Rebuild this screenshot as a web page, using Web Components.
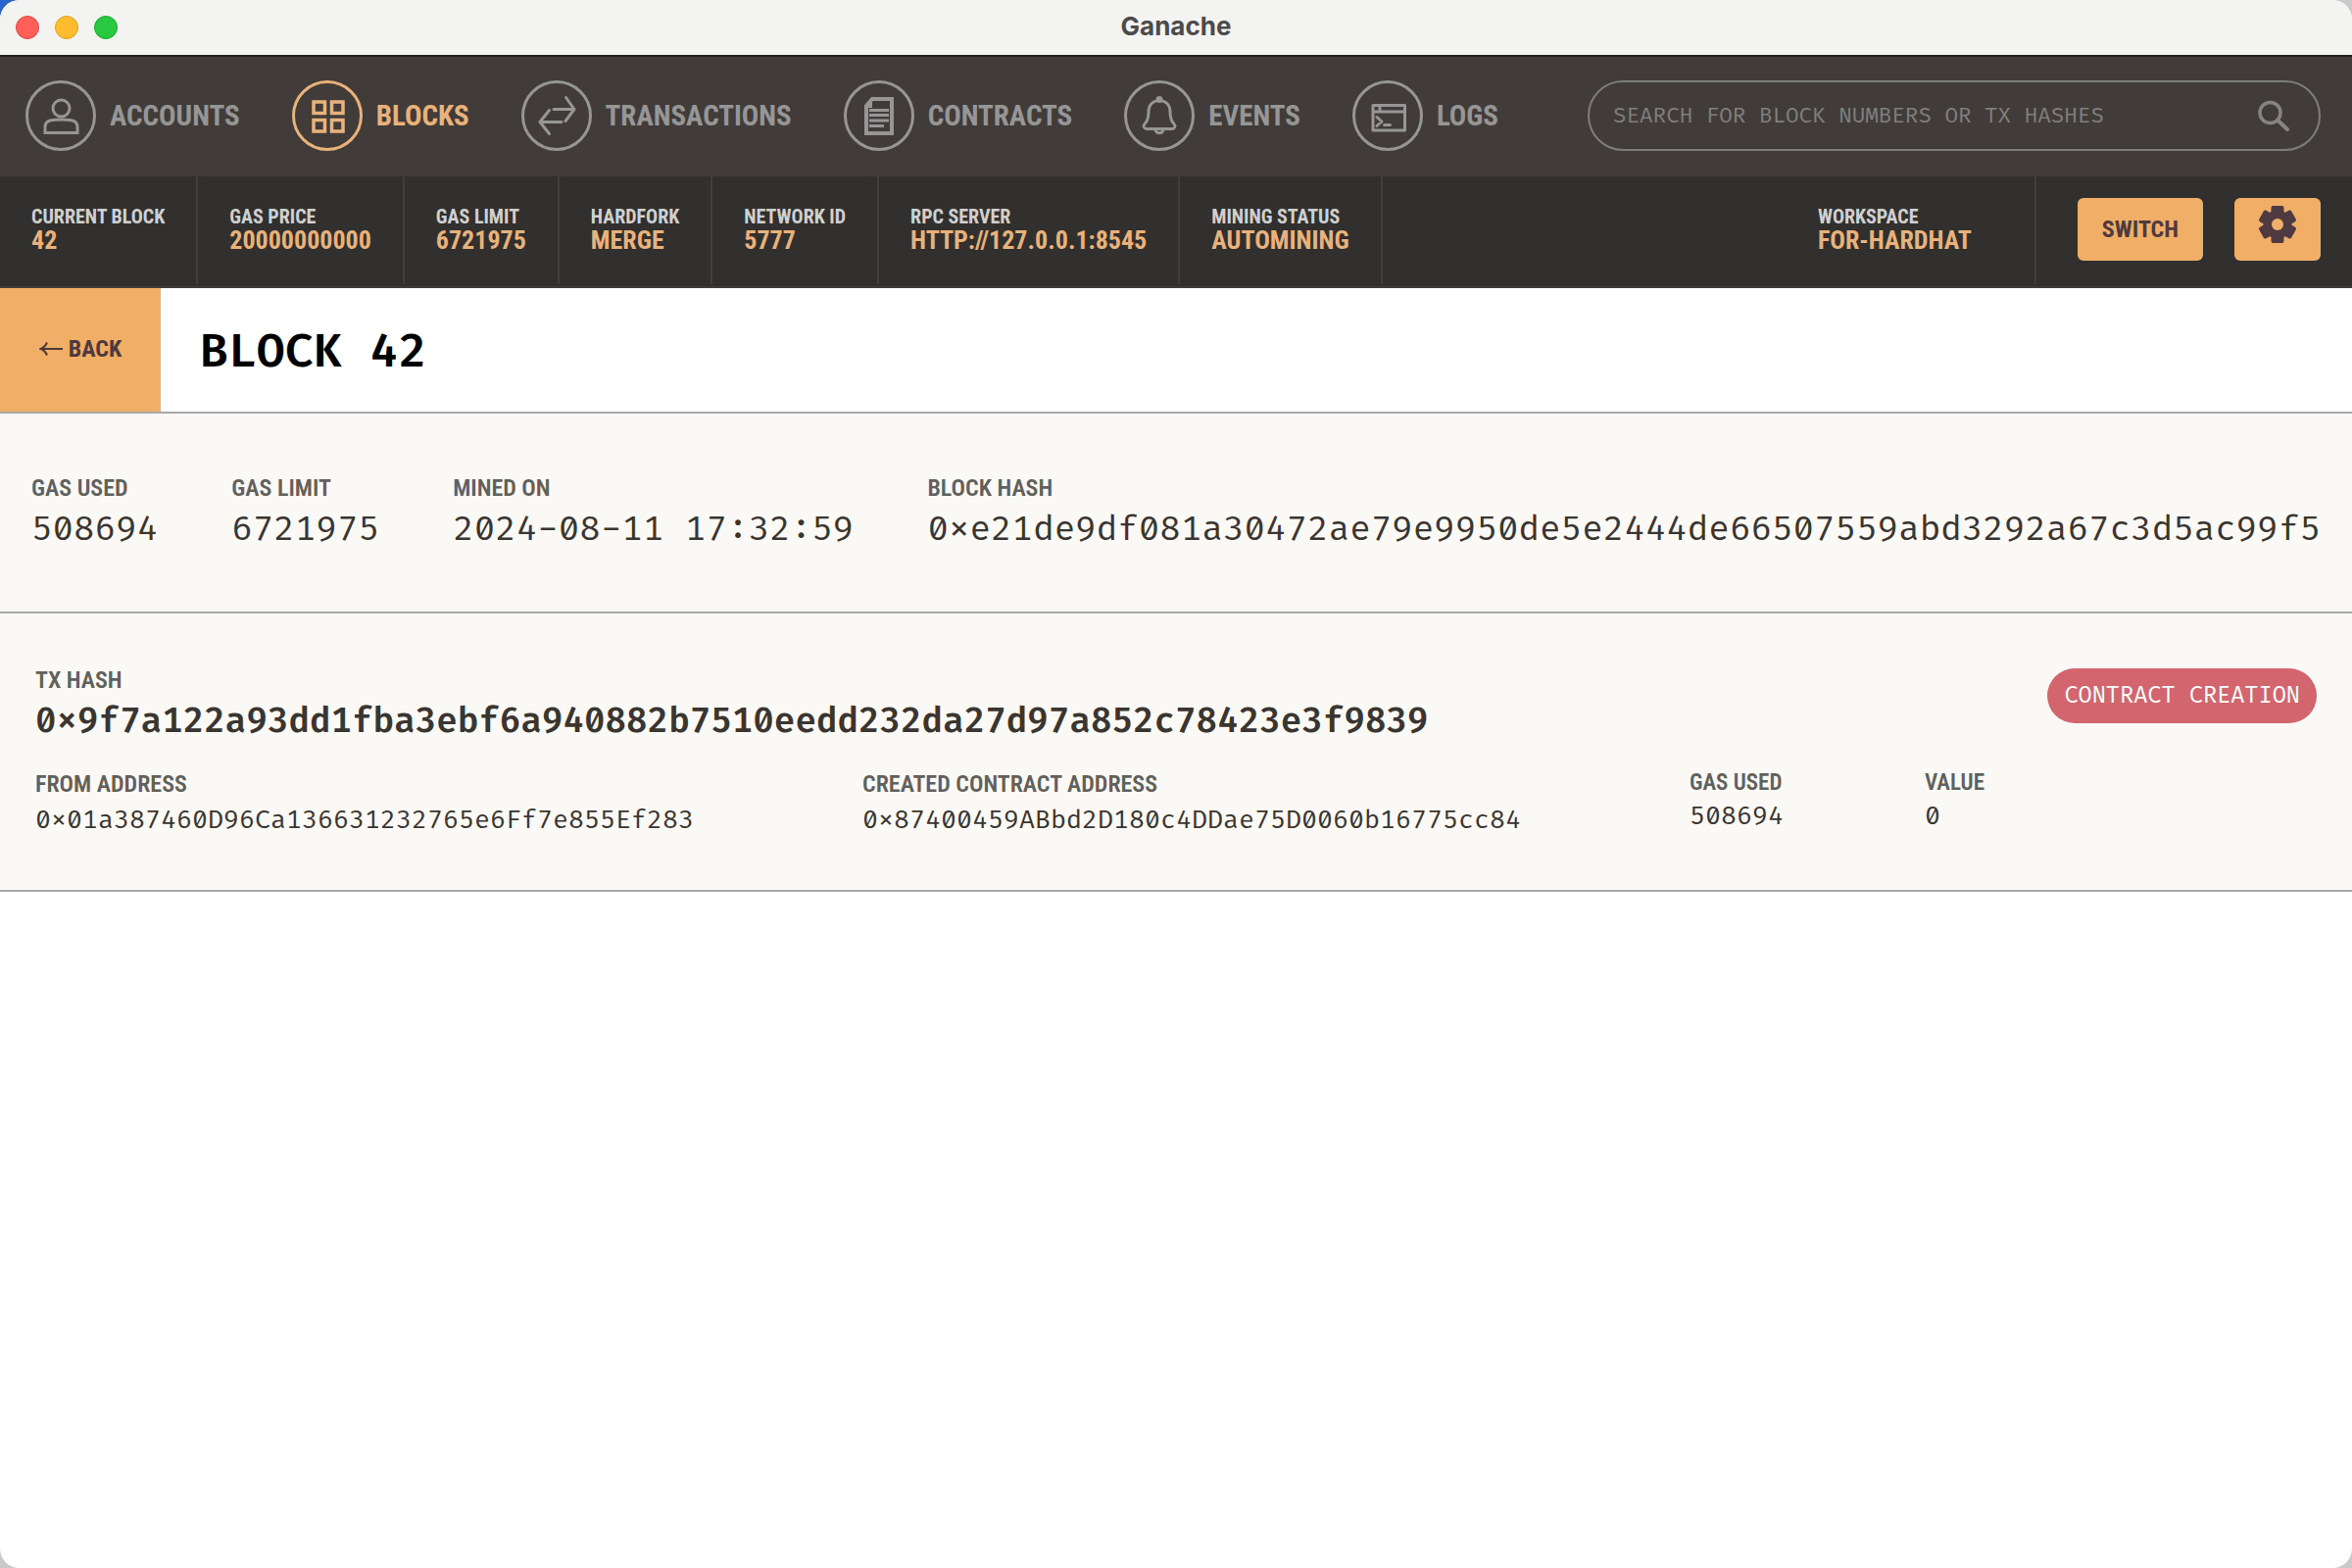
<!DOCTYPE html>
<html lang="en">
<head>
<meta charset="utf-8">
<title>Ganache</title>
<style>
  html, body { margin: 0; height: 100%; }
  body {
    background: radial-gradient(circle at 0 0, #2a63cc 0 24px, #c9c9c9 40px);
    --label: "Roboto Condensed", "Roboto", sans-serif;
    --mono: "Fira Code", "Liberation Mono", monospace;
    --accent: #f1ae66;
    --accent-text: #e9b27b;
    --plum: #4e3a40;
    --rule: #a9a8a8;
    --paper: #faf9f5;
    --ink: #3b3531;
    font-family: var(--label);
  }
</style>
</head>
<body>
<ganache-window></ganache-window>
<script>
const ICONS = {
  accounts: `<circle cx="36.5" cy="28.5" r="8.5"/><path d="M20 53.500V48c0-4 2-6.500 6-7.200 7-1.200 14-1.200 21 0 4 .7 6 3.200 6 7.200v5.500z"/>`,
  blocks: `<path d="M22 22h11.500v11.500h-11.500zM40.500 22h11.500v11.500h-11.500zM22 40.500h11.500v11.500h-11.500zM40.500 40.500h11.500v11.500h-11.500z" stroke-width="3.500"/>`,
  transactions: `<path d="M33 29.500H53M45.500 17.500L54 29.500L45 41.500M41 42.500H19.500M28.500 30.500L19 42.500L28.500 54.500" stroke-linecap="round" stroke-linejoin="round"/>`,
  contracts: `<path d="M23 26L29 19H49V54H23Z" stroke-width="4"/><path d="M21.500 27L29 18V28H21.500Z" fill="currentColor" stroke="none"/><path d="M26 30.500H46M26 35.500H46M26 41H46M26 46.500H41"/>`,
  events: `<path d="M36 20.500C28.500 21 25 26 25 32c0 6-1 9.500-4 12.500-2 2-.5 5 2 5h26c2.500 0 4-3 2-5-3-3-4-6.500-4-12.500 0-6-3.500-11-11-11.500z" stroke-linejoin="round"/><path d="M32 50c0 5 8 5 8 0"/><circle cx="36" cy="19.500" r="2"/>`,
  logs: `<path d="M21 25.500H53.500V51H21Z" stroke-linejoin="round"/><path d="M21 32H53.500M28 25V32"/><path d="M25 37.500L30 42L25 46.500M32.500 45.500H38.500" stroke-linecap="round" stroke-linejoin="round"/>`
};

const define = (name, render) => customElements.define(name, class extends HTMLElement {
  constructor() { super(); this.attachShadow({ mode: "open" }); }
  connectedCallback() { this.shadowRoot.innerHTML = render(this); }
});

define("title-bar", () => `
  <style>
    :host { display: grid; grid-template-columns: 1fr auto 1fr; align-items: center; height: 56px; padding: 0 16px; background: #f3f3f2; border-bottom: 2px solid #231f1e; }
    .lights { display: flex; gap: 16px; }
    i { width: 22px; height: 22px; border-radius: 50%; border: 1px solid; }
    h1 { margin: 0; padding-bottom: 2px; font: 700 26px/32px "Inter", sans-serif; color: #4b4b4b; }
  </style>
  <div class="lights">
    <i style="background:#ff5f57;border-color:#e2463f"></i>
    <i style="background:#febc2e;border-color:#dfa023"></i>
    <i style="background:#28c840;border-color:#1aab29"></i>
  </div>
  <h1><slot></slot></h1>`);

define("nav-item", el => `
  <style>
    :host { display: block; color: #969696; }
    :host([active]) { color: var(--accent-text); }
    a { display: flex; align-items: center; gap: 14px; padding: 0 26px; color: inherit; text-decoration: none; font: 700 29px/34px var(--label); }
    svg { width: 72px; height: 72px; fill: none; stroke: currentColor; stroke-width: 3; }
  </style>
  <a href="#${el.getAttribute("icon")}">
    <svg viewBox="0 0 72 72" aria-hidden="true"><circle cx="36" cy="36" r="34.500"/>${ICONS[el.getAttribute("icon")]}</svg>
    <span><slot></slot></span>
  </a>`);

define("search-field", () => `
  <style>
    :host { display: block; flex: 1; max-width: 748px; margin: 0 32px; }
    label { box-sizing: border-box; display: flex; align-items: center; height: 72px; padding: 0 30px 0 24px; border: 2px solid #7d7d7d; border-radius: 36px; }
    input { flex: 1; min-width: 0; padding: 2px 0 0; border: 0; outline: 0; background: none; color: #ccc; font: 400 22px/30px var(--mono); }
    input::placeholder { color: #7f7f7f; opacity: 1; }
    svg { width: 32px; height: 32px; fill: none; stroke: #858585; stroke-width: 4; stroke-linecap: round; }
  </style>
  <label>
    <input type="text" aria-label="Search" placeholder="SEARCH FOR BLOCK NUMBERS OR TX HASHES">
    <svg viewBox="0 0 32 32" aria-hidden="true"><circle cx="12.500" cy="13" r="10.500" stroke-width="3.500"/><path d="M20.500 21L30 30"/></svg>
  </label>`);

define("nav-bar", () => `
  <style>
    :host { display: flex; align-items: center; justify-content: space-between; height: 122px; box-sizing: border-box; padding-bottom: 2px; background: #413c39; }
    nav { display: flex; gap: 1px; }
  </style>
  <nav>
    <nav-item icon="accounts">ACCOUNTS</nav-item>
    <nav-item icon="blocks" active>BLOCKS</nav-item>
    <nav-item icon="transactions">TRANSACTIONS</nav-item>
    <nav-item icon="contracts">CONTRACTS</nav-item>
    <nav-item icon="events">EVENTS</nav-item>
    <nav-item icon="logs">LOGS</nav-item>
  </nav>
  <search-field></search-field>`);

define("status-cell", el => `
  <style>
    :host { display: flex; flex-direction: column; justify-content: center; padding: 0 32px 2px; border-right: 2px solid #413e3c; }
    .label { font: 700 20px/22px var(--label); color: #d0d0d0; }
    .value { font: 700 26px/26px var(--label); color: var(--accent-text); }
  </style>
  <div class="label">${el.getAttribute("label")}</div>
  <div class="value"><slot></slot></div>`);

define("status-bar", () => `
  <style>
    :host { display: flex; height: 110px; padding-bottom: 2px; background: #31302e; border-bottom: 2px solid #413e3c; }
    .workspace { margin-left: auto; padding-right: 64px; }
    .actions { display: flex; align-items: center; gap: 32px; padding: 0 32px 2px 42px; }
    button { display: flex; justify-content: center; align-items: center; height: 64px; padding: 0 25px; border: 0; border-radius: 6px; background: var(--accent); color: var(--plum); font: 700 24px/28px var(--label); }
    .gear { width: 88px; padding: 0 0 10px; }
    svg { width: 40px; height: 40px; }
  </style>
  <status-cell label="CURRENT BLOCK">42</status-cell>
  <status-cell label="GAS PRICE">20000000000</status-cell>
  <status-cell label="GAS LIMIT">6721975</status-cell>
  <status-cell label="HARDFORK">MERGE</status-cell>
  <status-cell label="NETWORK ID">5777</status-cell>
  <status-cell label="RPC SERVER">HTTP://127.0.0.1:8545</status-cell>
  <status-cell label="MINING STATUS">AUTOMINING</status-cell>
  <status-cell class="workspace" label="WORKSPACE">FOR-HARDHAT</status-cell>
  <div class="actions">
    <button type="button">SWITCH</button>
    <button type="button" class="gear" aria-label="Settings">
      <svg viewBox="-20 -20 40 40" aria-hidden="true" fill="currentColor">
        <mask id="hole"><rect x="-20" y="-20" width="40" height="40" fill="#fff"/><circle r="6" fill="#000"/></mask>
        <g mask="url(#hole)"><circle r="14.500"/>
          <rect x="-6.500" y="-19" width="13" height="38" rx="2"/><rect x="-6.500" y="-19" width="13" height="38" rx="2" transform="rotate(60)"/><rect x="-6.500" y="-19" width="13" height="38" rx="2" transform="rotate(120)"/>
        </g>
      </svg>
    </button>
  </div>`);

define("page-header", () => `
  <style>
    :host { display: flex; align-items: stretch; height: 126px; background: #fff; border-bottom: 2px solid var(--rule); }
    button { display: flex; align-items: center; justify-content: center; gap: 6px; width: 164px; padding: 0 0 2px; border: 0; background: var(--accent); color: var(--plum); font: 700 24px/28px var(--label); }
    svg { width: 24px; height: 16px; fill: none; stroke: currentColor; stroke-width: 2; }
    h2 { align-self: center; margin: 0 40px; padding-top: 6px; font: 600 47px/60px var(--mono); color: #000; }
  </style>
  <button type="button"><svg viewBox="0 0 24 16" aria-hidden="true"><path d="M1.500 8H24M8 1.500C6.500 5 4.500 7 1.500 8 4.500 9 6.500 11 8 14.500"/></svg>BACK</button>
  <h2><slot></slot></h2>`);

define("data-field", el => `
  <style>
    :host { display: block; color: var(--ink); }
    .label { font: 600 24px/32px var(--label); color: #62605c; }
    .value { font: 400 26px/42px var(--mono); white-space: nowrap; }
    :host([size="large"]) .value { font-size: 35px; line-height: 54px; }
    :host([strong]) .value { font-weight: 600; }
    :host([size="small"]) .label { font-size: 23px; line-height: 30px; }
    :host([size="small"]) .value { line-height: 38px; }
  </style>
  <div class="label">${el.getAttribute("label")}</div>
  <div class="value"><slot></slot></div>`);

define("block-details", () => `
  <style>
    :host { display: flex; justify-content: space-between; padding: 60px 32px 56px; background: var(--paper); border-bottom: 2px solid var(--rule); }
  </style>
  <data-field size="large" label="GAS USED">508694</data-field>
  <data-field size="large" label="GAS LIMIT">6721975</data-field>
  <data-field size="large" label="MINED ON">2024-08-11 17:32:59</data-field>
  <data-field size="large" label="BLOCK HASH">0xe21de9df081a30472ae79e9950de5e2444de66507559abd3292a67c3d5ac99f5</data-field>`);

define("transaction-card", () => `
  <style>
    :host { display: block; padding: 52px 36px 50px; background: var(--paper); border-bottom: 2px solid var(--rule); }
    .top { display: flex; justify-content: space-between; align-items: flex-start; }
    .badge { margin-top: 4px; padding: 0 17px; border-radius: 28px; background: #d2656e; color: #fff; font: 400 23px/56px var(--mono); white-space: nowrap; }
    .bottom { display: grid; grid-template-columns: 844fr 844fr 240fr 400fr; margin-top: 20px; }
  </style>
  <div class="top">
    <data-field size="large" strong label="TX HASH">0x9f7a122a93dd1fba3ebf6a940882b7510eedd232da27d97a852c78423e3f9839</data-field>
    <div class="badge">CONTRACT CREATION</div>
  </div>
  <div class="bottom">
    <data-field label="FROM ADDRESS">0x01a387460D96Ca136631232765e6Ff7e855Ef283</data-field>
    <data-field label="CREATED CONTRACT ADDRESS">0x87400459ABbd2D180c4DDae75D0060b16775cc84</data-field>
    <data-field size="small" label="GAS USED">508694</data-field>
    <data-field size="small" label="VALUE">0</data-field>
  </div>`);

define("ganache-window", () => `
  <style>
    :host { display: flex; flex-direction: column; min-height: 100vh; border-radius: 20px; overflow: hidden; background: #fff; }
  </style>
  <title-bar>Ganache</title-bar>
  <nav-bar></nav-bar>
  <status-bar></status-bar>
  <main>
    <page-header>BLOCK 42</page-header>
    <block-details></block-details>
    <transaction-card></transaction-card>
  </main>`);
</script>
</body>
</html>
